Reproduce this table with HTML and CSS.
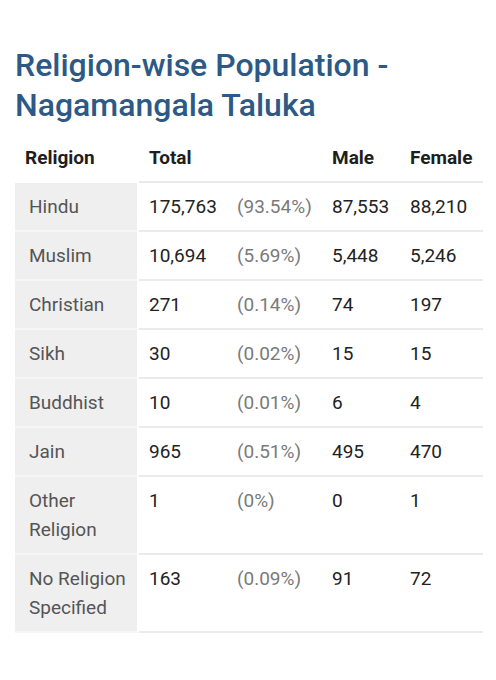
FILE: index.html
```html
<!DOCTYPE html>
<html lang="en">
<head>
    <meta charset="UTF-8">
    <meta name="viewport" content="width=device-width, initial-scale=1.0">
    <title>Religion-wise Population - Nagamangala Taluka</title>
    <link rel="stylesheet" href="styles.css">
</head>
<body>

    <div class="page">
        <h1 class="title">Religion-wise Population - Nagamangala Taluka</h1>

        <!-- Religion table -->
        <table class="pop-table">
            <colgroup>
                <col class="c-name">
                <col class="c-total">
                <col class="c-pct">
                <col class="c-male">
                <col class="c-female">
            </colgroup>
            <thead>
                <tr>
                    <th class="first">Religion</th>
                    <th colspan="2">Total</th>
                    <th>Male</th>
                    <th>Female</th>
                </tr>
            </thead>
            <tbody>
                <tr>
                    <td class="name">Hindu</td>
                    <td>175,763</td>
                    <td class="pct">(93.54%)</td>
                    <td>87,553</td>
                    <td>88,210</td>
                </tr>
                <tr>
                    <td class="name">Muslim</td>
                    <td>10,694</td>
                    <td class="pct">(5.69%)</td>
                    <td>5,448</td>
                    <td>5,246</td>
                </tr>
                <tr>
                    <td class="name">Christian</td>
                    <td>271</td>
                    <td class="pct">(0.14%)</td>
                    <td>74</td>
                    <td>197</td>
                </tr>
                <tr>
                    <td class="name">Sikh</td>
                    <td>30</td>
                    <td class="pct">(0.02%)</td>
                    <td>15</td>
                    <td>15</td>
                </tr>
                <tr>
                    <td class="name">Buddhist</td>
                    <td>10</td>
                    <td class="pct">(0.01%)</td>
                    <td>6</td>
                    <td>4</td>
                </tr>
                <tr>
                    <td class="name">Jain</td>
                    <td>965</td>
                    <td class="pct">(0.51%)</td>
                    <td>495</td>
                    <td>470</td>
                </tr>
                <tr>
                    <td class="name">Other Religion</td>
                    <td>1</td>
                    <td class="pct">(0%)</td>
                    <td>0</td>
                    <td>1</td>
                </tr>
                <tr>
                    <td class="name">No Religion Specified</td>
                    <td>163</td>
                    <td class="pct">(0.09%)</td>
                    <td>91</td>
                    <td>72</td>
                </tr>
            </tbody>
        </table>
    </div>

</body>
</html>
```

FILE: styles.css
```css
/* General Styling */
* {
    margin: 0;
    padding: 0;
    box-sizing: border-box;
    font-family: Roboto, "Liberation Sans", sans-serif;
}

body {
    background-color: #fff;
}

.page {
    padding: 45px 13px 40px 15px;
}

/* Title */
.title {
    font-size: 32px;
    font-weight: 500;
    line-height: 40px;
    color: #2d5986;
    margin-bottom: 9px;
}

/* Table */
.pop-table {
    width: 468px;
    table-layout: fixed;
    border-collapse: separate;
    border-spacing: 0;
    font-size: 19px;
    line-height: 29px;
}

.c-name { width: 124px; }
.c-total { width: 88px; }
.c-pct { width: 95px; }
.c-male { width: 78px; }
.c-female { width: 83px; }

.pop-table th {
    text-align: left;
    font-weight: 700;
    color: #1e1e1e;
    padding: 9px 10px;
    border-bottom: 2px solid #ebebeb;
}

.pop-table th.first {
    border-bottom-color: #fff;
}

.pop-table td {
    vertical-align: top;
    color: #222;
    padding: 9px 10px;
    border-bottom: 2px solid #ebebeb;
}

.pop-table td.name {
    background-color: #efefef;
    color: #555;
    padding-left: 14px;
    border-bottom-color: #f6f6f6;
    border-right: 2px solid #fff;
}

.pop-table td.pct {
    color: #7a7a7a;
}
```
